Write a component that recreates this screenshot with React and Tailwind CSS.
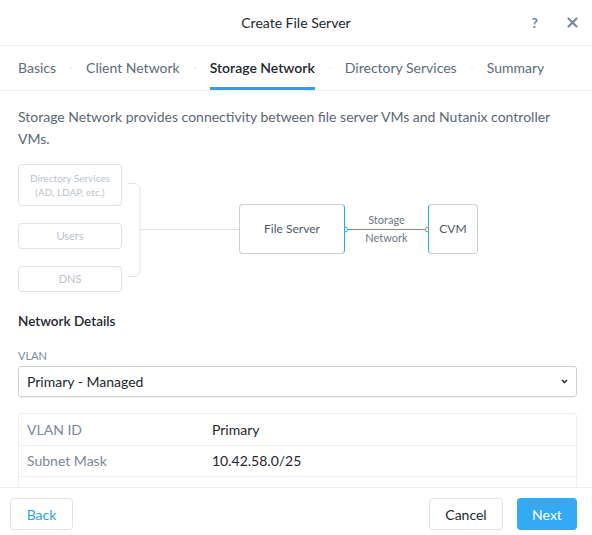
import React from "react";

const tabs = ["Basics", "Client Network", "Storage Network", "Directory Services", "Summary"];

function Header() {
  return (
    <div className="relative flex h-[46px] shrink-0 items-center justify-center border-b border-[#eef0f2]">
      <span className="text-[14px] text-[#22272e]">Create File Server</span>
      <div className="absolute right-[14px] top-0 flex h-full items-center gap-[29px] text-[#7b8a9b]">
        <span className="text-[14px] font-bold">?</span>
        <svg width="11" height="11" viewBox="0 0 11 11">
          <path d="M1.5 1.5l8 8M9.5 1.5l-8 8" stroke="currentColor" strokeWidth="2.2" strokeLinecap="round" />
        </svg>
      </div>
    </div>
  );
}

function Tabs() {
  return (
    <div className="flex h-[45px] shrink-0 items-stretch border-b border-[#eef0f2] px-[18px]">
      {tabs.map((t, i) => (
        <React.Fragment key={t}>
          {i > 0 && (
            <div className="flex w-[30px] items-center justify-center">
              <span className="h-[2px] w-[2px] rounded-full bg-[#e8ebee]" />
            </div>
          )}
          <div
            className={`flex items-center pb-[1px] text-[14px] ${
              t === "Storage Network"
                ? "border-b-[3px] border-[#22a4f0] pt-[2px] font-semibold text-[#22272e]"
                : "text-[#5b6b7d]"
            }`}
          >
            {t}
          </div>
        </React.Fragment>
      ))}
    </div>
  );
}

function Diagram() {
  return (
    <div className="mt-[14px] flex items-center">
      <div className="flex w-[104px] flex-col gap-[17px] text-center text-[#bcc3cb]">
        <div className="flex h-[42px] flex-col items-center justify-center rounded-[4px] border border-[#dfe3e7] text-[10px] leading-[14px]">
          <span>Directory Services</span>
          <span>(AD, LDAP, etc.)</span>
        </div>
        <div className="flex h-[26px] items-center justify-center rounded-[4px] border border-[#dfe3e7] text-[11px]">
          Users
        </div>
        <div className="flex h-[26px] items-center justify-center rounded-[4px] border border-[#dfe3e7] text-[11px]">
          DNS
        </div>
      </div>
      <svg width="117" height="128" viewBox="0 0 117 128" className="shrink-0">
        <path
          d="M6 19.5h6a6 6 0 0 1 6 6v81a6 6 0 0 1-6 6h-6"
          fill="none"
          stroke="#dfe3e7"
          strokeWidth="1"
        />
        <path d="M18 65.5h99" stroke="#dfe3e7" strokeWidth="1" />
      </svg>
      <div className="mt-[2px] flex h-[50px] w-[106px] items-center justify-center rounded-[4px] border border-[#c9d0d7] border-r-[#2aa7ef] text-[12px] text-[#4e5a67]">
        File Server
      </div>
      <div className="relative mt-[2px] flex h-[50px] w-[83px] items-center">
        <svg width="83" height="50" viewBox="0 0 83 50" className="absolute left-0 top-0">
          <path d="M0 25.5h83" stroke="#2aa7ef" strokeWidth="1" />
          <circle cx="0" cy="25.5" r="2.5" fill="#fff" stroke="#2aa7ef" strokeWidth="1" />
          <circle cx="83" cy="25.5" r="2.5" fill="#fff" stroke="#2aa7ef" strokeWidth="1" />
        </svg>
        <div className="relative flex w-full flex-col items-center text-[11px] leading-[18px] text-[#6b7785]">
          <span>Storage</span>
          <span>Network</span>
        </div>
      </div>
      <div className="mt-[2px] flex h-[50px] w-[50px] items-center justify-center rounded-[4px] border border-[#c9d0d7] border-l-[#2aa7ef] text-[12px] text-[#4e5a67]">
        CVM
      </div>
    </div>
  );
}

function DetailsTable() {
  const rows = [
    ["VLAN ID", "Primary"],
    ["Subnet Mask", "10.42.58.0/25"],
    ["", ""],
  ];
  return (
    <div className="mt-[16px] rounded-[3px] border border-[#eceef1]">
      {rows.map(([k, v], i) => (
        <div
          key={i}
          className={`flex h-[31px] items-center text-[14px] ${i > 0 ? "border-t border-[#eceef1]" : ""}`}
        >
          <span className="w-[193px] pl-[8px] text-[#7b8897]">{k}</span>
          <span className="text-[#22272e]">{v}</span>
        </div>
      ))}
    </div>
  );
}

export default function App() {
  return (
    <div className="flex h-[535px] w-[592px] flex-col overflow-hidden bg-white font-['Lato',sans-serif]">
      <Header />
      <Tabs />
      <div className="flex-1 overflow-hidden pl-[18px] pr-[15px] pt-[15px]">
        <p className="text-[14px] leading-[22px] text-[#5a6778]">
          Storage Network provides connectivity between file server VMs and Nutanix controller VMs.
        </p>
        <Diagram />
        <div className="mt-[19px] text-[13.5px] font-semibold text-[#22272e]">Network Details</div>
        <div className="mt-[17px] text-[11px] text-[#7b8897]">VLAN</div>
        <div className="mt-[1px] flex h-[31px] items-center justify-between rounded-[3px] border border-[#c9d0d7] pl-[8px] pr-[8px] shadow-[0_1px_1px_rgba(0,0,0,0.04)]">
          <span className="text-[14px] text-[#22272e]">Primary - Managed</span>
          <svg width="7" height="5" viewBox="0 0 7 5">
            <path d="M1 1l2.5 2.5L6 1" fill="none" stroke="#22272e" strokeWidth="1.5" />
          </svg>
        </div>
        <DetailsTable />
      </div>
      <div className="flex h-[48px] shrink-0 items-start justify-between border-t border-[#eef0f2] px-[10px] pt-[10px]">
        <button className="h-[32px] w-[63px] rounded-[4px] border border-[#dfe3e7] text-[14px] text-[#22a4f0]">
          Back
        </button>
        <div className="flex gap-[14px] pr-[5px]">
          <button className="h-[32px] w-[74px] rounded-[4px] border border-[#dfe3e7] text-[14px] text-[#22272e]">
            Cancel
          </button>
          <button className="h-[32px] w-[60px] rounded-[4px] bg-[#33aaf3] text-[14px] text-white">
            Next
          </button>
        </div>
      </div>
    </div>
  );
}
